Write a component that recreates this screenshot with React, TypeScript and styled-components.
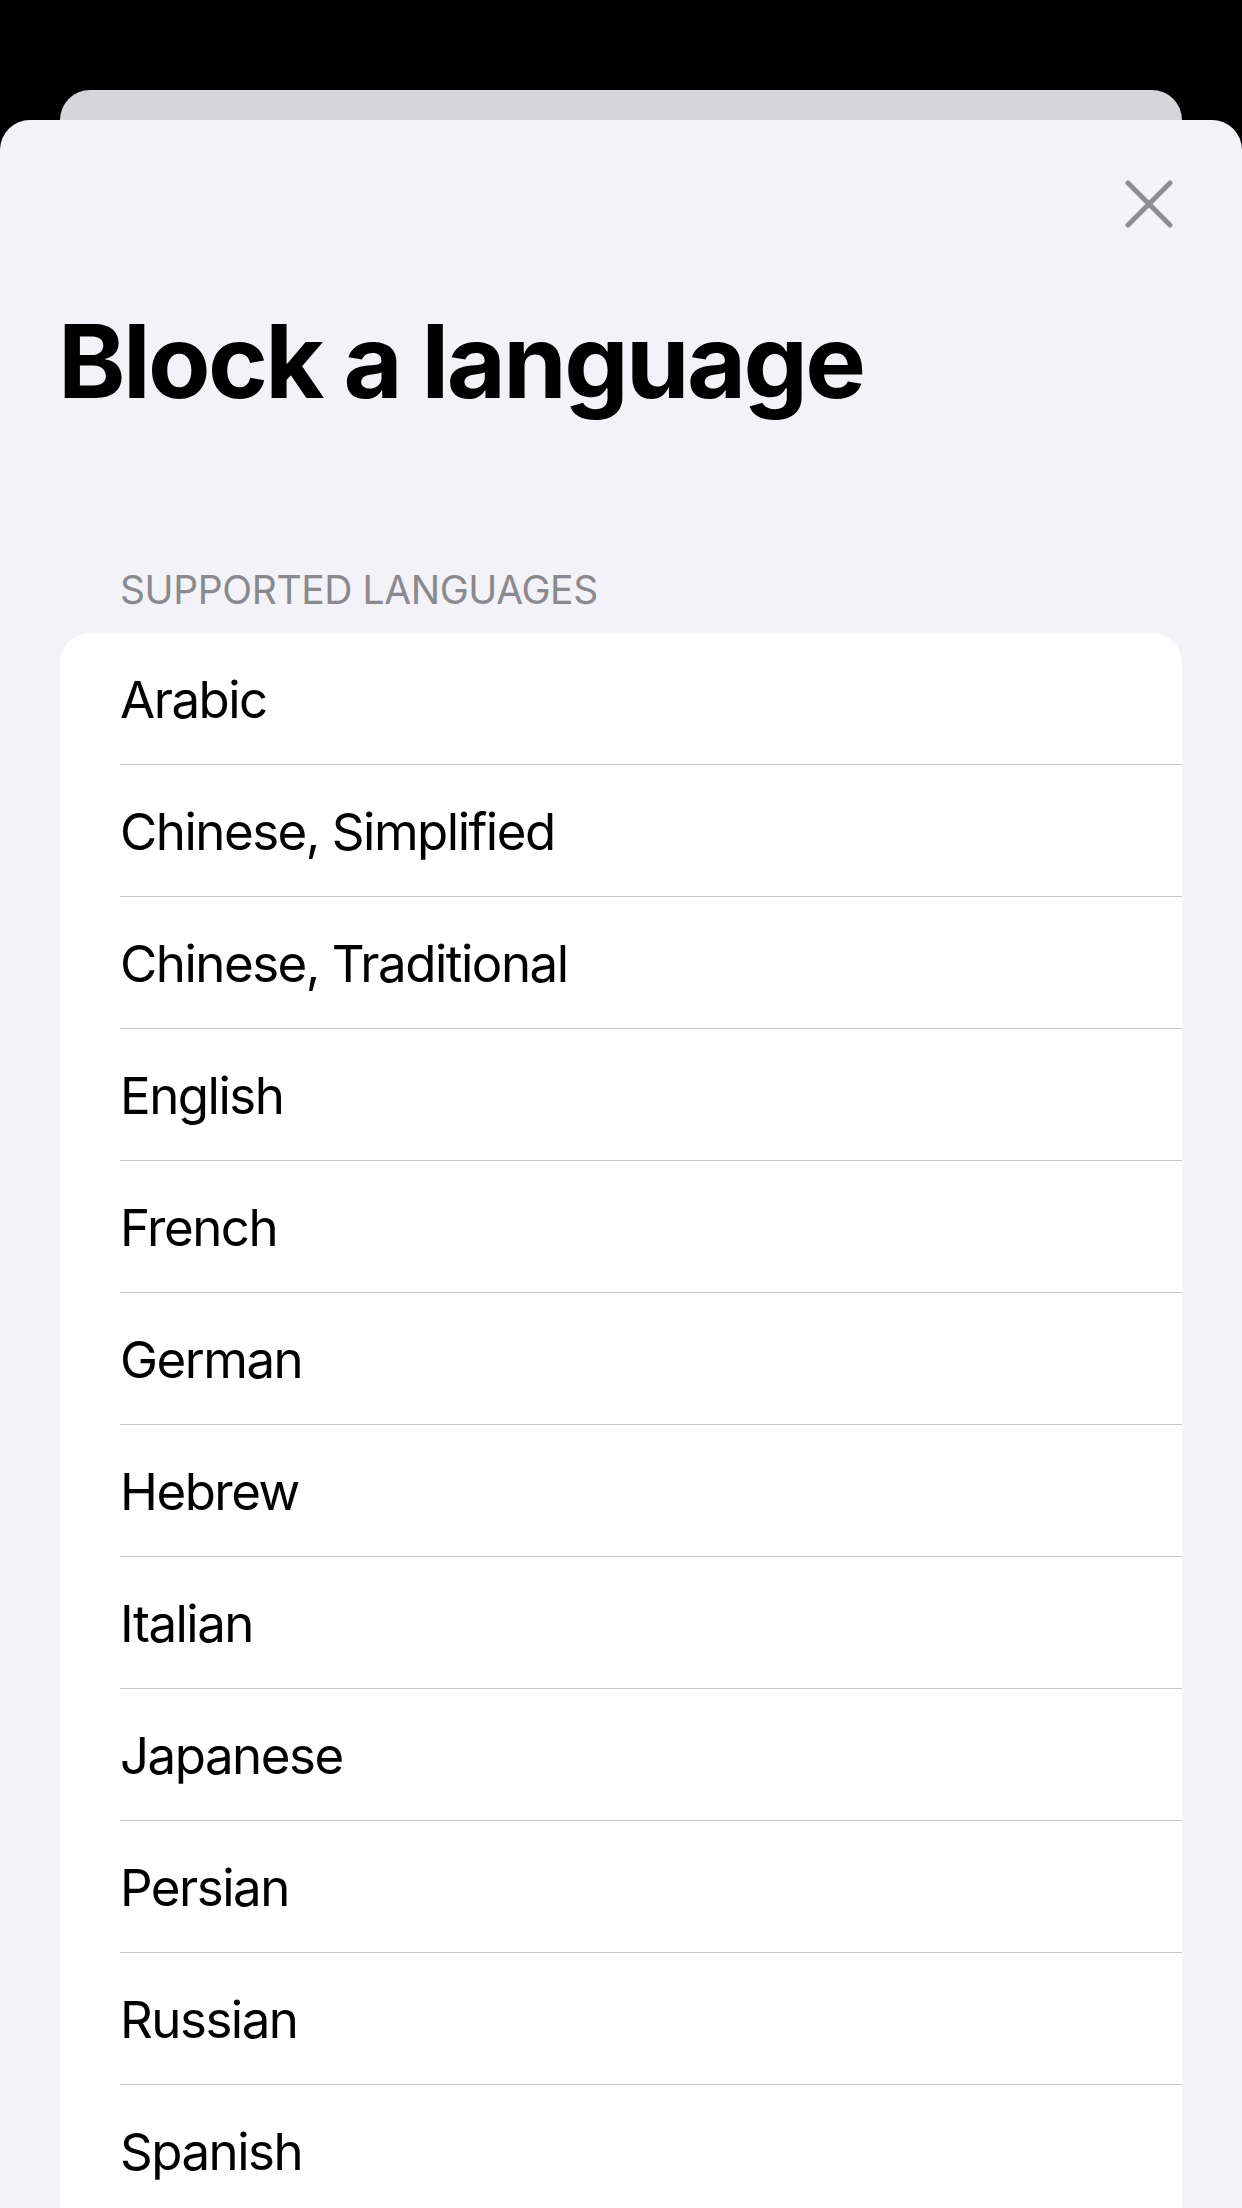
import * as React from 'react'
import styled, { createGlobalStyle } from 'styled-components'

const GlobalStyle = createGlobalStyle`
  html, body {
    margin: 0;
    padding: 0;
    background: #000;
  }
  body {
    font-family: Inter, "Liberation Sans", "Noto Sans", sans-serif;
    -webkit-font-smoothing: antialiased;
  }
`

const Screen = styled.div`
  display: flex;
  flex-direction: column;
  width: 1242px;
  height: 2208px;
  padding-top: 90px;
  box-sizing: border-box;
  overflow: hidden;
`

const BackCard = styled.div`
  flex-shrink: 0;
  height: 30px;
  margin: 0 60px;
  background: #d5d5da;
  border-radius: 30px 30px 0 0;
`

const Sheet = styled.div`
  flex: 1;
  display: flex;
  flex-direction: column;
  min-height: 0;
  padding: 0 60px;
  background: #f2f2f7;
  border-radius: 30px 30px 0 0;
  overflow: hidden;
`

const Toolbar = styled.div`
  display: flex;
  justify-content: flex-end;
  padding-top: 51px;
`

const CloseButton = styled.button`
  display: flex;
  align-items: center;
  justify-content: center;
  width: 66px;
  height: 66px;
  padding: 0;
  border: none;
  background: transparent;
  cursor: pointer;
`

const Title = styled.h1`
  margin: 63px 0 0 -2px;
  font-size: 102px;
  line-height: 1.2;
  font-weight: 700;
  letter-spacing: -2.6px;
  color: #000;
`

const SectionHeader = styled.div`
  margin: 145px 0 0 60px;
  font-size: 39px;
  line-height: 1.2;
  font-weight: 400;
  letter-spacing: -0.4px;
  color: #8a8a8e;
  text-transform: uppercase;
`

const Card = styled.ul`
  flex-shrink: 0;
  margin: 19px 0 0;
  padding: 0;
  list-style: none;
  background: #fff;
  border-radius: 30px 30px 0 0;
  overflow: hidden;
`

const Row = styled.li`
  padding-left: 60px;
`

const RowInner = styled.div`
  display: flex;
  align-items: center;
  height: 132px;
  padding-top: 2px;
  box-sizing: border-box;
  border-bottom: 1px solid #c6c6c8;
  font-size: 51px;
  letter-spacing: -1.5px;
  color: #000;
`

const languages = [
  'Arabic',
  'Chinese, Simplified',
  'Chinese, Traditional',
  'English',
  'French',
  'German',
  'Hebrew',
  'Italian',
  'Japanese',
  'Persian',
  'Russian',
  'Spanish',
]

const CloseIcon = () => (
  <svg width="48" height="48" viewBox="0 0 48 48" fill="none">
    <path
      d="M3 3 L45 45 M45 3 L3 45"
      stroke="#8e8e93"
      strokeWidth="5"
      strokeLinecap="round"
    />
  </svg>
)

export default function App() {
  return (
    <>
      <GlobalStyle />
      <Screen>
        <BackCard />
        <Sheet>
          <Toolbar>
            <CloseButton aria-label="Close">
              <CloseIcon />
            </CloseButton>
          </Toolbar>
          <Title>Block a language</Title>
          <SectionHeader>Supported Languages</SectionHeader>
          <Card>
            {languages.map((lang) => (
              <Row key={lang}>
                <RowInner>{lang}</RowInner>
              </Row>
            ))}
          </Card>
        </Sheet>
      </Screen>
    </>
  )
}
